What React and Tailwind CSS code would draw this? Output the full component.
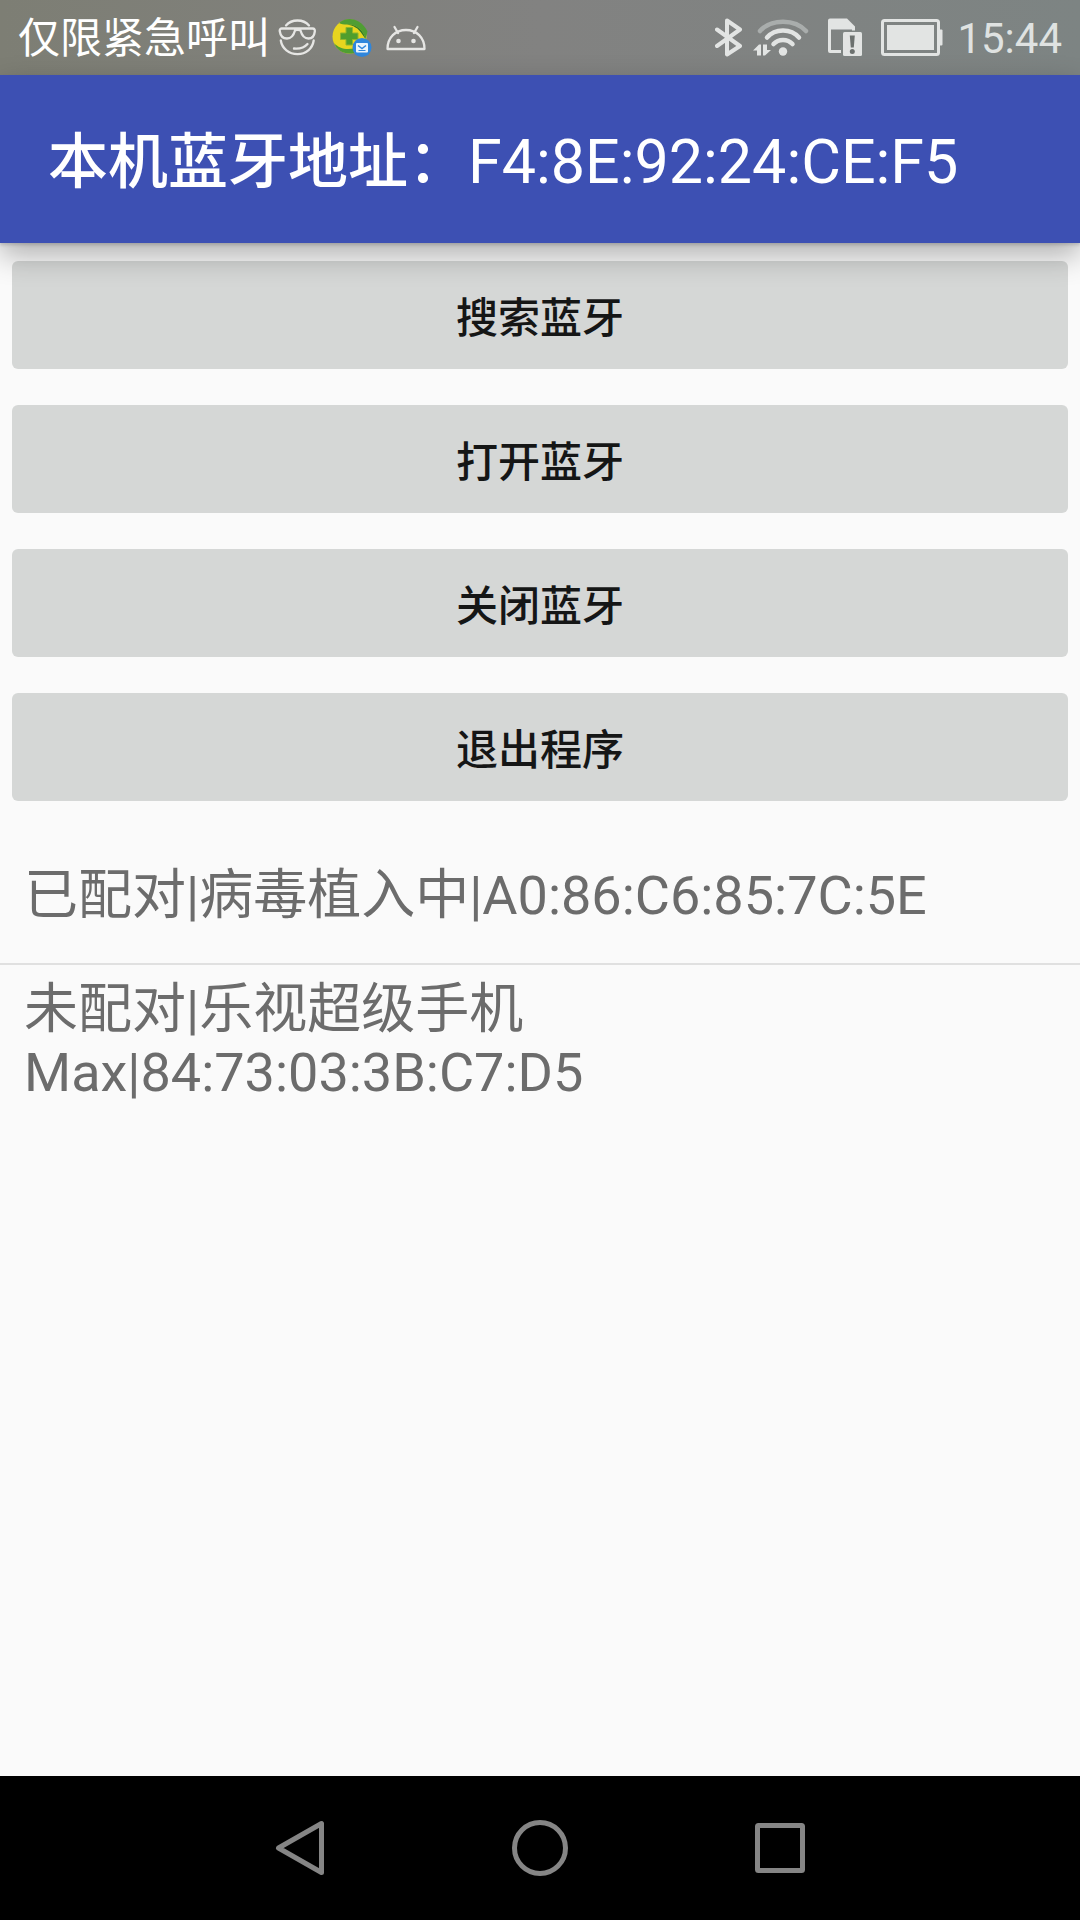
import React from "react";

const actions = ["搜索蓝牙", "打开蓝牙", "关闭蓝牙", "退出程序"];

const devices = [
  { status: "已配对", name: "病毒植入中", address: "A0:86:C6:85:7C:5E" },
  { status: "未配对", name: "乐视超级手机 Max", address: "84:73:03:3B:C7:D5" },
];

function FaceIcon() {
  return (
    <svg width="40" height="40" viewBox="0 0 40 40" fill="none" stroke="#e6e6e4" strokeWidth="2.300" strokeLinecap="round" aria-hidden="true">
      <path d="M8 7.500C11 4 15 2.500 19.500 2.500S28 4 31 7.500" />
      <path d="M3.500 10.500H34.500C36.500 10.500 37 12 36.800 13.500C36.300 18 34 20.500 30.500 20.500C26.500 20.500 24 18 22.500 12.500C21.500 11.500 18 11.500 17 12.500C15.500 18 13 20.500 9 20.500C5 20.500 2.500 18 1.800 13.500C1.500 12 2 10.500 3.500 10.500Z" />
      <path d="M2.800 22.500C4 30.500 11 36.200 19.500 36.200S34.500 30.500 35.700 22.500" />
      <path d="M16 30.500C22 31 26.500 29.500 29.500 26" />
    </svg>
  );
}

function SecurityIcon() {
  return (
    <svg width="40" height="40" viewBox="0 0 40 40" aria-hidden="true">
      <circle cx="17.500" cy="18.500" r="17" fill="#e8d51f" />
      <path d="M7 5C15-2 29 0 35.500 13.500L33.500 21C32 13 25 5.500 15 6.500C12 6.500 9 6.500 7 5Z" fill="#4f9e33" />
      <path d="M15 6.500C25 5.500 32 13 33.500 21L30 16C26.500 10 21 7.500 15 6.500Z" fill="#2f7a2c" />
      <path d="M2 25C7 30.500 15 32.500 23 30L22 35C13 37 5 33 2 25Z" fill="#4f9e33" />
      <path d="M14 9.500h6.500v5.500h5.500v6.500h-5.500v5.500h-6.500v-5.500h-5.500v-6.500h5.500z" fill="#4f9e2d" stroke="#8fb52b" strokeWidth="1" />
      <circle cx="30" cy="29.500" r="9.500" fill="#2f86dc" />
      <rect x="24" y="25" width="12" height="9.500" rx="1" fill="#e9f4fd" />
      <path d="M26 27.500l4 3 4-3" fill="none" stroke="#2f86dc" strokeWidth="1.500" />
      <path d="M26.500 32.500h7" stroke="#2f86dc" strokeWidth="1" />
    </svg>
  );
}

function AndroidIcon() {
  return (
    <svg width="40" height="40" viewBox="0 0 40 40" fill="none" stroke="#e6e6e4" strokeWidth="2.300" strokeLinecap="round" strokeLinejoin="round" aria-hidden="true">
      <path d="M1.500 31C1.500 19.500 9.500 12 20 12S38.500 19.500 38.500 31Z" />
      <path d="M8.500 9l3.500 6M31.500 9l-3.500 6" />
      <circle cx="12.500" cy="23" r="2.300" fill="#e6e6e4" stroke="none" />
      <circle cx="27.500" cy="23" r="2.300" fill="#e6e6e4" stroke="none" />
    </svg>
  );
}

function BluetoothIcon() {
  return (
    <svg width="28" height="40" viewBox="0 0 28 40" fill="none" stroke="#e2e4e3" strokeWidth="4" strokeLinejoin="round" strokeLinecap="round" role="img" aria-label="Bluetooth">
      <path d="M2 11.500L25 28L12 36.500V2.500L25 11.500L2 28" />
    </svg>
  );
}

function WifiIcon() {
  return (
    <svg width="56" height="40" viewBox="0 0 56 40" fill="none" strokeLinecap="round" strokeWidth="4.500" role="img" aria-label="Wi-Fi">
      <path d="M7 13C18 .500 42 .500 53 13" stroke="#a9adac" />
      <path d="M14 19.500C22 10 38 10 46 19.500" stroke="#e2e4e3" />
      <path d="M20.500 26C25.500 20.500 34.500 20.500 39.500 26" stroke="#e2e4e3" />
      <circle cx="30" cy="33.500" r="4.200" fill="#e2e4e3" />
      <path d="M0 32.500L6 26.500H8V37.500H4V32.500ZM18 32L12 37.500H10V26.500H14V32Z" fill="#e2e4e3" />
    </svg>
  );
}

function SimAlertIcon() {
  return (
    <svg width="36" height="40" viewBox="0 0 36 40" role="img" aria-label="SIM">
      <path fillRule="evenodd" d="M3 0.500H20L28 8.500V35H3Q1 35 1 33V2.500Q1 .500 3 .500ZM4 11.500V32H25V11.500Z" fill="#e2e4e3" />
      <rect x="14" y="12.500" width="22" height="26" fill="#7f8583" />
      <rect x="16" y="14" width="19" height="24" rx="1.500" fill="#e2e4e3" />
      <path d="M22.800 17.500h5l-1 12h-3z" fill="#6c716f" />
      <circle cx="25.300" cy="33.500" r="2.500" fill="#6c716f" />
    </svg>
  );
}

function BatteryIcon() {
  return (
    <svg width="62" height="40" viewBox="0 0 62 40" role="img" aria-label="Battery">
      <rect x="1.500" y="2.500" width="56" height="34" rx="2" fill="none" stroke="#e2e4e3" strokeWidth="3" />
      <rect x="6" y="7" width="47" height="25" fill="#e2e4e3" />
      <path d="M59 11.500h1.500q1 0 1 1v14q0 1-1 1h-1.500z" fill="#e2e4e3" />
    </svg>
  );
}

function StatusBar() {
  return (
    <div className="flex h-[75px] items-center justify-between bg-linear-to-r from-[#7d7e74] via-[#828281] to-[#7d8483] px-[18px]">
      <div className="flex items-center">
        <span className="pt-[2px] text-[42px] leading-[60px] text-white">仅限紧急呼叫</span>
        <div className="ml-2 flex items-center gap-[14px]">
          <FaceIcon />
          <SecurityIcon />
          <AndroidIcon />
        </div>
      </div>
      <div className="flex items-center">
        <BluetoothIcon />
        <div className="ml-[10px] flex items-center gap-[18px]">
          <WifiIcon />
          <SimAlertIcon />
          <BatteryIcon />
        </div>
        <time className="ml-[14px] pt-[2px] text-[42px] leading-[60px] text-[#dfe2e1]">15:44</time>
      </div>
    </div>
  );
}

function NavButton({ label, children }) {
  return (
    <button type="button" aria-label={label} className="flex h-36 w-60 items-center justify-center">
      <svg width="60" height="60" viewBox="0 0 60 60" fill="none" stroke="#858585" strokeWidth="5" strokeLinejoin="round">
        {children}
      </svg>
    </button>
  );
}

export default function App() {
  return (
    <div className="flex min-h-screen flex-col bg-[#fafafa] font-[Roboto,'Noto_Sans_CJK_SC',sans-serif]">
      <StatusBar />
      <header className="relative z-10 flex h-[168px] items-center bg-[#3d50b3] px-12 pt-1.5 shadow-[0_2px_3px_rgba(0,0,0,0.15),0_12px_28px_rgba(0,0,0,0.3)]">
        <h1 className="text-[60px] leading-[72px] font-medium text-white">
          本机蓝牙地址：<span className="text-[61px] font-normal">F4:8E:92:24:CE:F5</span>
        </h1>
      </header>
      <main className="flex-1">
        <div className="flex flex-col gap-9 px-3 py-[18px]">
          {actions.map((label) => (
            <button key={label} type="button" className="h-[108px] rounded-md bg-[#d5d7d6] pt-1.5 text-[42px] font-medium text-[#151616]">
              {label}
            </button>
          ))}
        </div>
        <ul className="divide-y-2 divide-[#e0e0e0] text-[54px] leading-[63px] text-[#6c6c6c]">
          {devices.map((d) => (
            <li key={d.address}>
              <div className="flex min-h-36 items-center px-6 pt-2">
                <p>{`${d.status}|${d.name}|${d.address}`}</p>
              </div>
            </li>
          ))}
        </ul>
      </main>
      <nav className="flex justify-center bg-black">
        <NavButton label="Back">
          <path d="M8.500 30L51.500 5.500V54.500Z" />
        </NavButton>
        <NavButton label="Home">
          <circle cx="30" cy="30" r="25.500" />
        </NavButton>
        <NavButton label="Recents">
          <rect x="7.500" y="7.500" width="45" height="45" rx="1" />
        </NavButton>
      </nav>
    </div>
  );
}
